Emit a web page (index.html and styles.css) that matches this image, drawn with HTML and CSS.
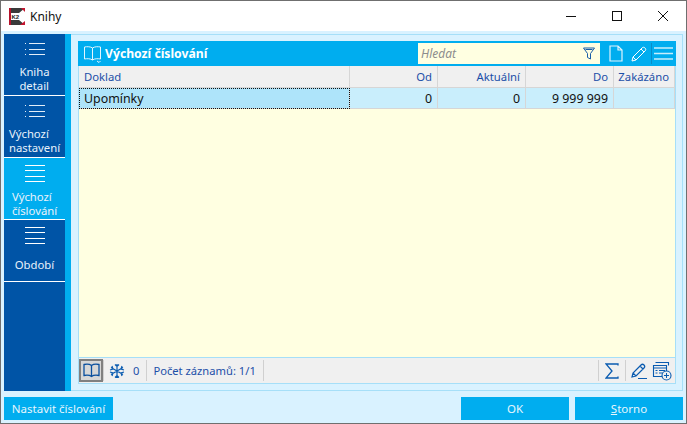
FILE: index.html
```html
<!DOCTYPE html>
<html lang="cs">
<head>
<meta charset="utf-8">
<title>Knihy</title>
<link rel="stylesheet" href="styles.css">
</head>
<body>
<div class="window">
  <header class="titlebar">
    <svg class="logo" width="16" height="17" viewBox="0 0 16 17"><rect width="16" height="17" fill="#fff"/><rect width="2" height="17" fill="#b5122b"/><path d="M2 0h14L10 5H2zM2 17h14l-6-5H2z" fill="#3a3a3a"/><path d="M12 0h4v4zM11 17h5v-4z" fill="#c4142e"/><text x="2.500" y="10.500" class="logo-text">K2</text></svg>
    <span class="title">Knihy</span>
    <div class="win-controls">
      <svg width="14" height="14" viewBox="0 0 14 14"><path d="M2 7.500h10" stroke="#111" fill="none"/></svg>
      <svg width="14" height="14" viewBox="0 0 14 14"><rect x="2.500" y="2.500" width="9" height="9" stroke="#111" fill="none"/></svg>
      <svg width="14" height="14" viewBox="0 0 14 14"><path d="M2 2l10 10M12 2L2 12" stroke="#111" fill="none"/></svg>
    </div>
  </header>
  <div class="client">
    <div class="main">
      <nav class="nav">
        <a class="nav-item dotted">
          <svg class="nav-icon" width="20" height="14" viewBox="0 0 20 14"><path d="M0 1.500h1M0 7.500h1M0 12.500h1M4 1.500h16M4 7.500h16M4 12.500h16" stroke="#e4eef8"/></svg>
          <span class="nav-label">Kniha<br>detail</span>
        </a>
        <a class="nav-item dotted">
          <svg class="nav-icon" width="20" height="14" viewBox="0 0 20 14"><path d="M0 1.500h1M0 7.500h1M0 12.500h1M4 1.500h16M4 7.500h16M4 12.500h16" stroke="#e4eef8"/></svg>
          <span class="nav-label">Výchozí<br>nastavení</span>
        </a>
        <a class="nav-item lined active">
          <svg class="nav-icon" width="20" height="17" viewBox="0 0 20 17"><path d="M0 .5h20M0 5.500h20M0 11.500h20M0 16.500h20" stroke="#fff"/></svg>
          <span class="nav-label">Výchozí<br>číslování</span>
        </a>
        <a class="nav-item lined single">
          <svg class="nav-icon" width="20" height="17" viewBox="0 0 20 17"><path d="M0 .5h20M0 5.500h20M0 11.500h20M0 16.500h20" stroke="#fff"/></svg>
          <span class="nav-label">Období</span>
        </a>
      </nav>
      <div class="strip"></div>
      <div class="frame">
        <section class="panel">
          <div class="panel-head">
            <svg class="book" width="19" height="18" viewBox="0 0 19 18"><path d="M9.500 3C7.500 1.500 4 1.500 1.500 2v12c2.500-.5 6-.5 8 1 2-1.500 5.500-1.500 8-1V2C15 1.500 11.500 1.500 9.500 3zM9.500 3v12M14 16l2 1.500 1.500-1.500" fill="none" stroke="#e4f6fe"/></svg>
            <span class="panel-title">Výchozí číslování</span>
            <div class="search">
              <span class="search-text">Hledat</span>
              <svg width="12" height="13" viewBox="0 0 12 13"><path d="M.5 1h11L7.500 6.500V12l-3-1.500V6.500zM2.500 2.500h7" fill="none" stroke="#1a5ea8"/></svg>
            </div>
            <svg class="head-ic page" width="14" height="17" viewBox="0 0 14 17"><path d="M1 1h8l4 4v11H1zM9 1v4h4" fill="none" stroke="#dff4fd" stroke-width="1.200"/></svg>
            <svg class="head-ic edit" width="16" height="16" viewBox="0 0 16 16"><path d="M1 15l1-4L11 2c1-1 2-1 3 0s1 2 0 3l-9 9zM2 11l3 3M10 3l3 3" fill="none" stroke="#fff"/></svg>
            <span class="head-sep"></span>
            <svg class="burger" width="19" height="13" viewBox="0 0 19 13"><path d="M0 1h19M0 6.500h19M0 12h19" stroke="#c8eefc" stroke-width="1.500"/></svg>
          </div>
          <div class="grid grid-head">
            <div class="cell left">Doklad</div>
            <div class="cell">Od</div>
            <div class="cell">Aktuální</div>
            <div class="cell">Do</div>
            <div class="cell">Zakázáno</div>
          </div>
          <div class="grid grid-row">
            <div class="cell left focus">Upomínky</div>
            <div class="cell">0</div>
            <div class="cell">0</div>
            <div class="cell">9 999 999</div>
            <div class="cell"></div>
          </div>
          <div class="grid-body"></div>
          <div class="panel-foot">
            <span class="book-btn"><svg width="17" height="15" viewBox="0 0 17 15"><path d="M8.500 2.500C6.500 1 3.500 1 1 1.500v11c2.500-.5 5.500-.5 7.500 1 2-1.500 5-1.500 7.500-1v-11C13.500 1 10.500 1 8.500 2.500zM8.500 2.500v11" fill="none" stroke="#0a4f9e" stroke-width="1.300"/></svg></span>
            <span class="sep first"></span>
            <svg class="snow" width="16" height="16" viewBox="0 0 16 16"><path d="M8 1v14M2 4.500l12 7M14 4.500l-12 7M6 1.500l2 2 2-2M6 14.500l2-2 2 2M1 7l3-1-1-3M15 7l-3-1 1-3M1 9l3 1-1 3M15 9l-3 1 1 3" fill="none" stroke="#0a5bb0" stroke-width="1.200"/></svg>
            <span class="count">0</span>
            <span class="sep"></span>
            <span class="records">Počet záznamů: 1/1</span>
            <span class="sep"></span>
            <span class="spacer"></span>
            <span class="sep"></span>
            <svg class="sigma" width="14" height="16" viewBox="0 0 14 16"><path d="M13 2.500V1H1l6 7-6 7h12v-1.500" fill="none" stroke="#0a5bb0" stroke-width="1.300"/></svg>
            <span class="sep"></span>
            <svg class="pen" width="17" height="18" viewBox="0 0 17 18"><path d="M1 15l1-4 8-8c1-1 2-1 3 0s1 2 0 3l-8 8zM2 11l3 3M9 4l3 3M7 16.500h9" fill="none" stroke="#0a5bb0" stroke-width="1.200"/></svg>
            <svg class="addlist" width="20" height="20" viewBox="0 0 20 20"><path d="M3.500 1.500h13v3M1.500 4.500h13v11h-13zM1.500 4.500h13v2.500h-13zM3.500 9.500h2M7 9.500h6M3.500 12h2M7 12h4" fill="none" stroke="#0a5bb0" stroke-width="1.100"/><circle cx="14.500" cy="14.500" r="4.500" fill="#f0f0f0" stroke="#0a5bb0" stroke-width="1.100"/><path d="M12 14.500h5M14.500 12v5" stroke="#0a5bb0"/></svg>
          </div>
        </section>
      </div>
    </div>
    <footer class="buttons">
      <button class="btn">Nastavit číslování</button>
      <span class="spacer"></span>
      <button class="btn wide">OK</button>
      <button class="btn wide"><u>S</u>torno</button>
    </footer>
  </div>
</div>
</body>
</html>
```
FILE: styles.css
```css
* { box-sizing: border-box; }
html, body { margin: 0; height: 100%; }
body { font-family: "Noto Sans", "Open Sans", sans-serif; font-size: 12px; overflow: hidden; }
.window { width: 687px; height: 424px; border: 1px solid #6f6f6f; display: flex; flex-direction: column; background: #d9f2ff; }
.titlebar { height: 30px; background: #fff; display: flex; align-items: center; padding-left: 8px; flex: none; }
.logo { margin-right: 5px; }
.logo-text { font: bold 6px "Liberation Sans", sans-serif; fill: #222; }
.title { font-size: 12px; color: #111; }
.win-controls { margin-left: auto; display: flex; gap: 32px; padding-right: 16px; }
.client { flex: 1; display: flex; flex-direction: column; padding: 3px; min-height: 0; }
.main { height: 357px; display: flex; flex: none; }
.nav { width: 61px; background: #0054a6; display: flex; flex-direction: column; flex: none; }
.nav-item { height: 62px; border-bottom: 1px solid #fff; color: #e8f2fb; display: flex; flex-direction: column; align-items: center; font-size: 11.3px; line-height: 14px; text-align: left; flex: none; }
.nav-item.dotted { padding-top: 8px; }
.nav-item.lined { padding-top: 7px; }
.nav-item.active { background: #00adef; }
.nav-icon { flex: none; }
.dotted .nav-label { margin-top: 9px; }
.lined .nav-label { margin-top: 8px; }
.single .nav-label { margin-top: 14px; }
.strip { width: 6px; background: #00adef; flex: none; }
.frame { flex: 1; display: flex; min-width: 0; padding: 6px 6px 6px 7px; border: 1px solid #a6dff8; border-left: 0; }
.panel { flex: 1; display: flex; flex-direction: column; border: 1px solid #a6dff8; border-top: 0; background: #ffffe1; min-width: 0; }
.panel-head { height: 25px; background: #00adef; display: flex; align-items: center; padding-left: 5px; flex: none; margin: 0 -1px; color: #fff; }
.panel-title { font-weight: bold; font-size: 12.2px; margin-left: 3px; }
.search { width: 182px; height: 21px; background: #ffffe1; margin-left: auto; display: flex; align-items: center; justify-content: space-between; padding: 0 5px 0 3px; }
.search-text { font-style: italic; color: #8d8d8d; font-size: 12px; }
.head-ic { flex: none; }
.page { margin-left: 9px; }
.edit { margin-left: 8px; }
.head-sep { width: 1px; height: 21px; background: #0a8cc8; margin-left: 4px; flex: none; }
.burger { margin: 0 3px 0 2px; flex: none; }
.grid { display: grid; grid-template-columns: 271px 88px 88px 88px 61px; flex: none; }
.grid-head { height: 22px; background: #f0f0f0; color: #1c4fa8; font-size: 11.3px; }
.grid-row { height: 21px; background: #c9eefc; color: #111; font-size: 12.4px; }
.cell { border-right: 1px solid #d6d6d6; border-bottom: 1px solid #d6d6d6; padding: 0 5px 0 0; display: flex; align-items: center; justify-content: flex-end; }
.cell.left { justify-content: flex-start; padding-left: 5px; }
.grid-row .left { background: #aee4fa; font-size: 12.4px; }
.focus { outline: 1px dotted #111; outline-offset: -1px; }
.grid-body { flex: 1; background: #ffffe1; }
.panel-foot { height: 26px; background: #f0f0f0; border-top: 1px solid #a6dff8; display: flex; align-items: center; color: #1c4fa8; font-size: 11.2px; flex: none; }
.book-btn { width: 24px; height: 23px; background: #d7d7d7; border: 2px solid #808080; display: flex; align-items: center; justify-content: center; flex: none; }
.sep { width: 1px; height: 21px; background: #d0d0d0; flex: none; }
.snow { margin: 0 8px 0 5px; flex: none; }
.count { margin-right: 7px; }
.records { margin: 0 7px 0 6px; }
.spacer { flex: 1; }
.sigma { margin: 0 6px 0 6px; flex: none; }
.pen { margin: 0 4px 0 5px; flex: none; }
.addlist { margin-right: 3px; flex: none; }
.buttons { display: flex; gap: 6px; margin-top: 6px; height: 23px; flex: none; }
.btn { border: 0; background: #00adef; color: #e6f6fd; font: 11.5px "Noto Sans", sans-serif; padding: 0; width: 109px; height: 23px; }
.btn.wide { width: 108px; }
```
